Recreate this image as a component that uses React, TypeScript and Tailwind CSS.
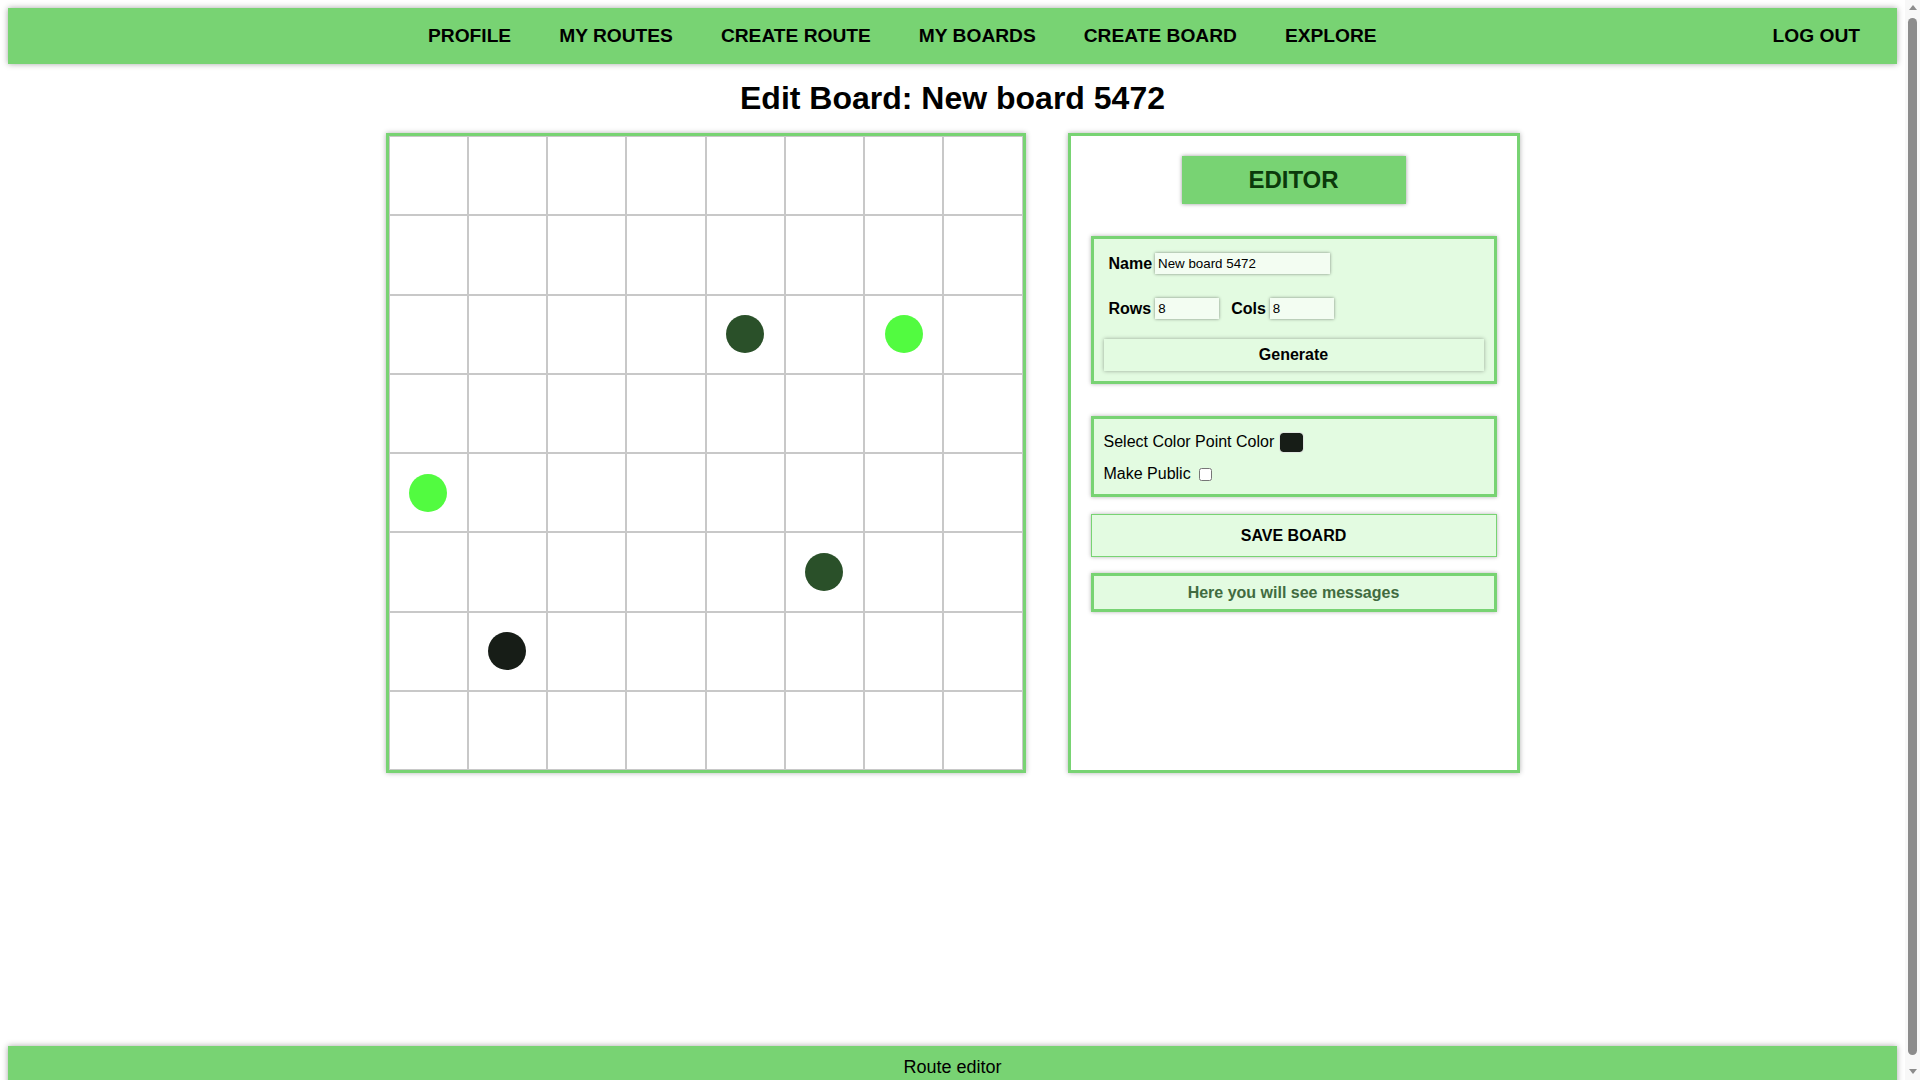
import React from 'react';

const GREEN = 'bg-[#78d373]';

const links = ['PROFILE', 'MY ROUTES', 'CREATE ROUTE', 'MY BOARDS', 'CREATE BOARD', 'EXPLORE'];

// points on the board: [row, col, color]
const points: [number, number, string][] = [
  [2, 4, '#2a5029'],
  [2, 6, '#52fb40'],
  [4, 0, '#52fb40'],
  [5, 5, '#2a5029'],
  [6, 1, '#171d17'],
];

function Navbar() {
  return (
    <nav className={`${GREEN} h-[56px] flex items-center pl-[420px] pr-[37px] shadow-[0_0_6px_rgba(0,0,0,0.35)]`}>
      <div className="flex items-center gap-[48px]">
        {links.map((l) => (
          <a key={l} className="text-[19.2px] font-bold text-black cursor-pointer">
            {l}
          </a>
        ))}
      </div>
      <a className="ml-auto text-[19.2px] font-bold text-black cursor-pointer">LOG OUT</a>
    </nav>
  );
}

function Board() {
  const cells = [];
  for (let r = 0; r < 8; r++) {
    for (let c = 0; c < 8; c++) {
      const p = points.find((pt) => pt[0] === r && pt[1] === c);
      cells.push(
        <div key={`${r}-${c}`} className="border border-[#c8c8c8] flex items-center justify-center">
          {p && <div className="w-[38px] h-[38px] rounded-full" style={{ backgroundColor: p[2] }} />}
        </div>
      );
    }
  }
  return (
    <div className="w-[640px] h-[640px] border-[3px] border-[#78d373] bg-white grid grid-cols-8 grid-rows-8 shadow-[0_0_5px_rgba(0,0,0,0.3)]">
      {cells}
    </div>
  );
}

function Field({ value, w }: { value: string; w: string }) {
  return (
    <input
      readOnly
      value={value}
      className={`${w} h-[21px] bg-[#f3fdf2] px-[3px] text-[13.33px] text-black outline-none shadow-[0_0_3px_rgba(0,0,0,0.45)]`}
    />
  );
}

function EditorPanel() {
  return (
    <div className="w-[452px] border-[3px] border-[#78d373] bg-white px-5 pt-5 flex flex-col shadow-[0_0_5px_rgba(0,0,0,0.3)]">
      {/* header */}
      <div className={`${GREEN} w-[224px] h-[48px] mx-auto flex items-center justify-center text-[24px] font-bold text-[#0b3a0b] shadow-[0_0_4px_rgba(0,0,0,0.4)]`}>
        EDITOR
      </div>

      {/* board settings */}
      <div className="mt-8 border-[3px] border-[#78d373] bg-[#e3fbe1] p-[10px] shadow-[0_0_4px_rgba(0,0,0,0.3)]">
        <div className="mt-[4px] h-[21px] pl-[5px] flex items-center gap-[3px]">
          <span className="text-[16px] leading-[18px] font-bold">Name</span>
          <Field value="New board 5472" w="w-[175px]" />
        </div>
        <div className="mt-[24px] h-[21px] pl-[5px] flex items-center">
          <span className="text-[16px] leading-[18px] font-bold mr-[4px]">Rows</span>
          <Field value="8" w="w-[64px]" />
          <span className="text-[16px] leading-[18px] font-bold ml-[12px] mr-[4px]">Cols</span>
          <Field value="8" w="w-[64px]" />
        </div>
        <button className="mt-[20px] w-full h-[32px] bg-[#e3fbe1] text-[16px] font-bold text-black shadow-[0_0_4px_rgba(0,0,0,0.35)]">
          Generate
        </button>
      </div>

      {/* point settings */}
      <div className="mt-8 border-[3px] border-[#78d373] bg-[#e3fbe1] p-[10px] pb-[11px] shadow-[0_0_4px_rgba(0,0,0,0.3)]">
        <div className="h-[26px] flex items-center text-[16px]">
          Select Color Point Color
          <div className="ml-[6px] w-[23px] h-[19px] rounded-[3px] bg-[#171d17] outline outline-1 outline-[#e0e6e0]" />
        </div>
        <div className="mt-[10px] h-[18px] flex items-center text-[16px]">
          Make Public
          <input type="checkbox" className="ml-[8px] w-[13px] h-[13px]" />
        </div>
      </div>

      <button className="mt-[17px] h-[43px] border border-[#78d373] bg-[#e3fbe1] text-[16px] font-bold text-black shadow-[0_0_4px_rgba(0,0,0,0.3)]">
        SAVE BOARD
      </button>

      <div className="mt-4 h-[39px] border-[3px] border-[#78d373] bg-[#e3fbe1] flex items-center justify-center text-[16px] font-bold text-[#416b40] shadow-[0_0_4px_rgba(0,0,0,0.3)]">
        Here you will see messages
      </div>
    </div>
  );
}

function Scrollbar() {
  return (
    <div className="fixed top-0 right-0 w-[15px] h-screen bg-[#f8f8f8] flex flex-col items-center">
      <div className="mt-[5px] w-0 h-0 border-x-[4px] border-x-transparent border-b-[5px] border-b-[#8c8c8c]" />
      <div className="mt-[8px] w-[9px] flex-1 rounded-full bg-[#8c8c8c]" />
      <div className="mt-[14px] mb-[6px] w-0 h-0 border-x-[4px] border-x-transparent border-t-[5px] border-t-[#8c8c8c]" />
    </div>
  );
}

export default function App() {
  return (
    <div className="mr-[15px] p-2 bg-white font-['Liberation_Sans',Arial,sans-serif] text-black">
      <div className="min-h-screen flex flex-col">
        <Navbar />
        <main className="flex-1">
          <h1 className="mt-4 mb-4 text-center text-[32px] leading-[37px] font-bold">Edit Board: New board 5472</h1>
          <div className="flex justify-center items-stretch gap-[42px]">
            <Board />
            <EditorPanel />
          </div>
        </main>
        <footer className={`${GREEN} h-[42px] flex items-center justify-center text-[18px] shadow-[0_0_6px_rgba(0,0,0,0.35)]`}>
          Route editor
        </footer>
      </div>
      <Scrollbar />
    </div>
  );
}
